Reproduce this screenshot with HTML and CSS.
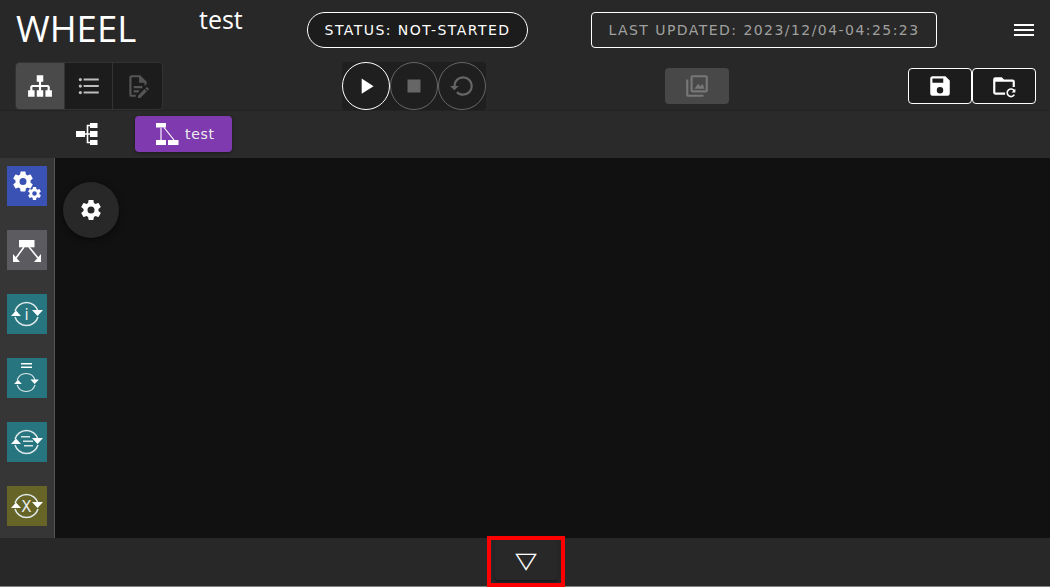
FILE: index.html
```html
<!DOCTYPE html>
<html lang="en">
<head>
    <meta charset="UTF-8">
    <meta name="viewport" content="width=device-width, initial-scale=1.0">
    <title>WHEEL</title>
    <link rel="stylesheet" href="styles.css">
</head>
<body>

    <svg class="defs" width="0" height="0" aria-hidden="true">
        <symbol id="cycle" viewBox="0 0 40 40">
            <path d="M8 17A12 12 0 0 1 31 17M31 23A12 12 0 0 1 8 23" fill="none" stroke="#dfe9ea" stroke-width="1.500"/>
            <path d="M4 22L9 16.500L14 22ZM25 16H36L30.500 22Z" fill="#fff"/>
        </symbol>
        <symbol id="cog" viewBox="0 0 24 24">
            <path d="M12,15.5A3.5,3.5 0 0,1 8.5,12A3.5,3.5 0 0,1 12,8.5A3.5,3.5 0 0,1 15.5,12A3.5,3.5 0 0,1 12,15.5M19.43,12.97C19.47,12.65 19.5,12.33 19.5,12C19.5,11.67 19.47,11.34 19.43,11L21.54,9.37C21.73,9.22 21.78,8.95 21.66,8.73L19.66,5.27C19.54,5.05 19.27,4.96 19.05,5.05L16.56,6.05C16.04,5.66 15.5,5.32 14.87,5.07L14.5,2.42C14.46,2.18 14.25,2 14,2H10C9.75,2 9.54,2.18 9.5,2.42L9.13,5.07C8.5,5.32 7.96,5.66 7.44,6.05L4.95,5.05C4.73,4.96 4.46,5.05 4.34,5.27L2.34,8.73C2.21,8.95 2.27,9.22 2.46,9.37L4.57,11C4.53,11.34 4.5,11.67 4.5,12C4.5,12.33 4.53,12.65 4.57,12.97L2.46,14.63C2.27,14.78 2.21,15.05 2.34,15.27L4.34,18.73C4.46,18.95 4.73,19.03 4.95,18.95L7.44,17.94C7.96,18.34 8.5,18.68 9.13,18.93L9.5,21.58C9.54,21.82 9.75,22 10,22H14C14.25,22 14.46,21.82 14.5,21.58L14.87,18.93C15.5,18.67 16.04,18.34 16.56,17.94L19.05,18.95C19.27,19.03 19.54,18.95 19.66,18.73L21.66,15.27C21.78,15.05 21.73,14.78 21.54,14.63L19.43,12.97Z" fill="#fff"/>
        </symbol>
    </svg>

    <header class="top">
        <div class="top-row">
            <span class="app-name">WHEEL</span>
            <span class="project-name">test</span>
            <span class="status">STATUS: NOT-STARTED</span>
            <span class="updated">LAST UPDATED: 2023/12/04-04:25:23</span>
            <svg class="menu" viewBox="0 0 20 12"><path d="M0 0H20V2H0ZM0 5H20V7H0ZM0 10H20V12H0Z" fill="#fff"/></svg>
        </div>
        <div class="tool-row">
            <div class="views">
                <button class="view active">
                    <svg viewBox="0 0 24 24"><path d="M9,2V8H11V11H5C3.89,11 3,11.89 3,13V16H1V22H7V16H5V13H11V16H9V22H15V16H13V13H19V16H17V22H23V16H21V13C21,11.89 20.1,11 19,11H13V8H15V2H9Z" fill="#fff"/></svg>
                </button>
                <button class="view">
                    <svg viewBox="0 0 24 24"><path d="M7,5H21V7H7V5M7,13V11H21V13H7M4,4.5A1.5,1.5 0 0,1 5.5,6A1.5,1.500 0 0,1 4,7.5A1.5,1.5 0 0,1 2.5,6A1.5,1.5 0 0,1 4,4.5M4,10.5A1.5,1.5 0 0,1 5.5,12A1.5,1.5 0 0,1 4,13.5A1.5,1.5 0 0,1 2.5,12A1.5,1.5 0 0,1 4,10.5M7,19V17H21V19H7M4,16.5A1.5,1.5 0 0,1 5.5,18A1.5,1.5 0 0,1 4,19.5A1.5,1.5 0 0,1 2.5,18A1.5,1.5 0 0,1 4,16.5Z" fill="#bdbdbd"/></svg>
                </button>
                <button class="view">
                    <svg viewBox="0 0 24 24"><path d="M8,12H16V14H8V12M10,20H6V4H13V9H18V12.1L20,10.1V8L14,2H6A2,2 0 0,0 4,4V20A2,2 0 0,0 6,22H10V20M8,18H12.1L13,17.1V16H8V18M20.2,13C20.3,13 20.5,13.1 20.6,13.2L21.9,14.5C22.1,14.7 22.1,15.1 21.9,15.3L20.9,16.3L18.8,14.2L19.8,13.2C19.9,13.1 20,13 20.2,13M20.2,16.9L14.1,23H12V20.9L18.1,14.8L20.2,16.9Z" fill="#555"/></svg>
                </button>
            </div>
            <div class="runs">
                <button class="run on">
                    <svg viewBox="0 0 24 24"><path d="M8,5.14V19.14L19,12.14L8,5.14Z" fill="#fff"/></svg>
                </button>
                <button class="run">
                    <svg viewBox="0 0 24 24"><path d="M18,18H6V6H18V18Z" fill="#666"/></svg>
                </button>
                <button class="run">
                    <svg viewBox="0 0 24 24"><path d="M13,3A9,9 0 0,0 4,12H1L4.89,15.89L4.96,16.03L9,12H6A7,7 0 0,1 13,5A7,7 0 0,1 20,12A7,7 0 0,1 13,19C11.07,19 9.32,18.21 8.06,16.94L6.64,18.36C8.27,20 10.5,21 13,21A9,9 0 0,0 22,12A9,9 0 0,0 13,3" fill="#666"/></svg>
                </button>
            </div>
            <button class="graph-btn">
                <svg viewBox="0 0 24 24"><path d="M8,2H20A2,2 0 0,1 22,4V16A2,2 0 0,1 20,18H8A2,2 0 0,1 6,16V4A2,2 0 0,1 8,2M8,4V16H20V4H8M2,6H4V20H18V22H4A2,2 0 0,1 2,20V6M10,14L13,10L15,12.500L17,10L19,14.500H9.500Z" fill="#777"/></svg>
            </button>
            <div class="files">
                <button class="file-btn">
                    <svg viewBox="0 0 24 24"><path d="M15,9H5V5H15M12,19A3,3 0 0,1 9,16A3,3 0 0,1 12,13A3,3 0 0,1 15,16A3,3 0 0,1 12,19M17,3H5C3.89,3 3,3.9 3,5V19A2,2 0 0,0 5,21H19A2,2 0 0,0 21,19V7L17,3Z" fill="#fff"/></svg>
                </button>
                <button class="file-btn">
                    <svg viewBox="0 0 24 24"><path d="M4,4H10L12,6H20A2,2 0 0,1 22,8V13H20V8H4V18H13V20H4A2,2 0 0,1 2,18V6A2,2 0 0,1 4,4Z" fill="#fff"/><path d="M21.500 16.500A3.500 3.500 0 1 0 21.500 20" fill="none" stroke="#fff" stroke-width="1.500"/><path d="M22.500 14.500V18H19Z" fill="#fff"/></svg>
                </button>
            </div>
        </div>
    </header>

    <nav class="crumbs">
        <svg class="tree" viewBox="0 0 22 22">
            <path d="M0 8H9V14H0ZM14 0H21.500V5H14ZM14 8H21.500V14H14ZM14 17H21.500V22H14Z" fill="#fff"/>
            <path d="M9 11H14M14 2.500H11.500V19.500H14" fill="none" stroke="#fff" stroke-width="1.600"/>
        </svg>
        <button class="crumb">
            <svg viewBox="0 0 23 22">
                <path d="M0 0H10V4.500H0ZM0 17H10V22H0ZM12 17H22.500V22H12Z" fill="#fff"/>
                <path d="M5 4.500V17" stroke="#c9a8e0" stroke-width="2"/>
                <path d="M8 4.500L18 17" stroke="#fff" stroke-width="1.200"/>
            </svg>
            test
        </button>
    </nav>

    <main class="work">
        <aside class="palette">
            <div class="tile task">
                <svg viewBox="0 0 40 40">
                    <use href="#cog" x="4" y="3.500" width="24" height="24"/>
                    <use href="#cog" x="19.700" y="19.700" width="15.600" height="15.600"/>
                </svg>
            </div>
            <div class="tile branch">
                <svg viewBox="0 0 40 40">
                    <path d="M12 10H27.500V17.300H12Z" fill="#fff"/>
                    <path d="M17 17L9 28M22 17L31 28" stroke="#fff" stroke-width="1.600"/>
                    <path d="M6 24L13 32H6ZM34 24V32H27Z" fill="#fff"/>
                </svg>
            </div>
            <div class="tile loop">
                <svg viewBox="0 0 40 40">
                    <use href="#cycle"/>
                    <text x="19.500" y="25.500" class="tile-text">i</text>
                </svg>
            </div>
            <div class="tile loop">
                <svg viewBox="0 0 40 40">
                    <path d="M14 5H25V6.500H14ZM14 8.500H25V10H14Z" fill="#fff"/>
                    <use href="#cycle" x="4" y="9" width="31" height="31"/>
                </svg>
            </div>
            <div class="tile loop">
                <svg viewBox="0 0 40 40">
                    <use href="#cycle"/>
                    <path d="M14 14H23V15.500H14ZM16 18.500H26V20H16ZM17 23H26V24.500H17Z" fill="#d6e6e6"/>
                </svg>
            </div>
            <div class="tile foreach">
                <svg viewBox="0 0 40 40">
                    <use href="#cycle"/>
                    <text x="19.500" y="25.500" class="tile-text">X</text>
                </svg>
            </div>
        </aside>
        <section class="canvas">
            <button class="prop-btn">
                <svg viewBox="0 0 24 24"><use href="#cog"/></svg>
            </button>
        </section>
    </main>

    <footer class="bottom">
        <button class="log-toggle">
            <span class="arrow">▽</span>
            <span class="mark"></span>
        </button>
    </footer>

</body>
</html>
```

FILE: styles.css
```css
/* General Body Styles */
* {
    box-sizing: border-box;
}

body {
    margin: 0;
    width: 1050px;
    height: 587px;
    overflow: hidden;
    display: flex;
    flex-direction: column;
    background: #282828;
    color: #fff;
    font-family: "DejaVu Sans", Verdana, sans-serif;
}

button {
    padding: 0;
    border: none;
    background: none;
    color: inherit;
    font: inherit;
    display: flex;
    justify-content: center;
    align-items: center;
}

.defs {
    position: absolute;
}

/* Header */
.top {
    height: 111px;
    flex: none;
    background: #282828;
    border-bottom: 1px solid #222;
}

.top-row {
    height: 62px;
    display: flex;
    align-items: flex-start;
}

.app-name {
    margin: 8px 0 0 16px;
    width: 183px;
    font-family: "Open Sans", sans-serif;
    font-size: 36.5px;
    line-height: 40px;
}

.project-name {
    margin-top: 4px;
    width: 108px;
    font-family: "Open Sans", sans-serif;
    font-size: 25px;
    line-height: 30px;
}

.status,
.updated {
    height: 36px;
    margin-top: 12px;
    display: flex;
    align-items: center;
    justify-content: center;
    border: 1px solid #fff;
    font-size: 14px;
    letter-spacing: 1.45px;
    white-space: nowrap;
}

.status {
    width: 221px;
    border-radius: 18px;
    background: #1c1c1c;
}

.updated {
    width: 346px;
    margin-left: 63px;
    border-radius: 4px;
    color: #a0a0a0;
}

.menu {
    width: 20px;
    height: 12px;
    margin: 24px 0 0 77px;
}

/* Tool row */
.tool-row {
    height: 48px;
    display: flex;
    align-items: center;
}

.views {
    width: 148px;
    height: 48px;
    margin-left: 15px;
    display: flex;
    background: #1c1c1c;
    border: 1px solid #333;
    border-radius: 4px;
    overflow: hidden;
}

.view {
    width: 49px;
    border-right: 1px solid #333;
}

.view:last-child {
    border-right: none;
}

.view.active {
    background: #4a4a4a;
}

.view svg,
.run svg,
.graph-btn svg,
.file-btn svg {
    width: 26px;
    height: 26px;
}

.runs {
    margin-left: 179px;
    display: flex;
    background: #1f1f1f;
    border-radius: 4px;
}

.run {
    width: 48px;
    height: 48px;
    border: 1px solid #666;
    border-radius: 50%;
}

.run.on {
    border-color: #fff;
}

.graph-btn {
    width: 64px;
    height: 36px;
    margin-left: 179px;
    background: #484848;
    border-radius: 4px;
}

.files {
    margin-left: 179px;
    display: flex;
}

.file-btn {
    width: 64px;
    height: 36px;
    background: #1c1c1c;
    border: 1px solid #fff;
    border-radius: 4px;
}

/* Breadcrumb */
.crumbs {
    height: 47px;
    flex: none;
    display: flex;
    align-items: center;
    padding: 0 0 2px 76px;
    background: #2a2a2a;
}

.tree {
    width: 22px;
    height: 22px;
}

.crumb {
    width: 97px;
    height: 36px;
    margin-left: 37px;
    padding-left: 21px;
    justify-content: flex-start;
    gap: 6px;
    background: #7f3ab0;
    border-radius: 4px;
    font-size: 14px;
    letter-spacing: 0.7px;
    color: #eee;
    box-shadow: 0 1px 3px rgba(0, 0, 0, 0.4);
}

.crumb svg {
    width: 23px;
    height: 22px;
}

/* Work area */
.work {
    height: 380px;
    flex: none;
    display: flex;
}

.palette {
    width: 55px;
    flex: none;
    padding: 8px 0 0 7px;
    display: flex;
    flex-direction: column;
    gap: 24px;
    background: #363636;
    border-right: 1px solid #555;
}

.tile {
    width: 40px;
    height: 40px;
}

.tile svg {
    width: 40px;
    height: 40px;
    display: block;
}

.task {
    background: #3a52b4;
}

.branch {
    background: #5c5c60;
}

.loop {
    background: #26757f;
}

.foreach {
    background: #676428;
}

.tile-text {
    fill: #e8eeee;
    font-size: 15px;
    text-anchor: middle;
}

.canvas {
    flex: 1;
    padding: 24px 0 0 8px;
    background: #111;
}

.prop-btn {
    width: 56px;
    height: 56px;
    border-radius: 50%;
    background: #282828;
    box-shadow: 0 2px 6px rgba(0, 0, 0, 0.5);
}

.prop-btn svg {
    width: 24px;
    height: 24px;
}

/* Bottom bar */
.bottom {
    flex: 1;
    display: flex;
    justify-content: center;
    background: #282828;
    border-bottom: 1px solid #808080;
}

.log-toggle {
    position: relative;
    width: 63px;
    height: 42px;
    margin-left: 3px;
    border-radius: 4px;
    box-shadow: 0 2px 3px rgba(0, 0, 0, 0.35);
}

.arrow {
    display: block;
    margin: 4px 1px 0 0;
    font-size: 28px;
    line-height: 1;
    transform: scaleY(0.8);
}

/* Red annotation box */
.mark {
    position: absolute;
    left: -8px;
    top: -2px;
    width: 78px;
    height: 51px;
    border: 4px solid #f00;
}
```
